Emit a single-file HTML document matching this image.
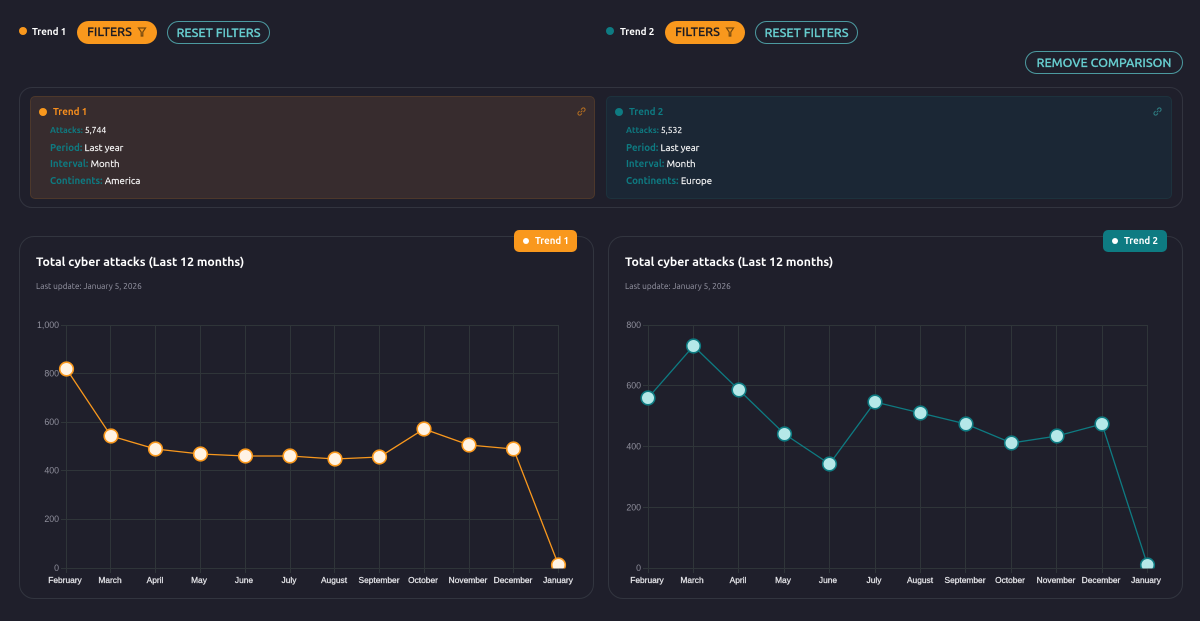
<!DOCTYPE html>
<html><head><meta charset="utf-8">
<style>
html,body{margin:0;padding:0;background:#1f1f2b;}
body{width:1200px;height:621px;overflow:hidden;position:relative;font-family:"Ubuntu","DejaVu Sans","Liberation Sans",sans-serif;}
.a{position:absolute;white-space:nowrap;box-sizing:border-box;}
.dot{border-radius:50%;}
.pill{border-radius:13px;height:23px;font-size:12.5px;font-weight:500;text-align:center;-webkit-text-stroke:.25px currentColor;}
.f{background:#f9981d;color:#1b1b24;line-height:23px;}
.r{border:1px solid #4c9aa0;color:#67cdcf;line-height:22px;}
.card{border-radius:5px;}
.lb{font-size:9.7px;color:#0e7b82;font-weight:bold;}
.lb span{color:#fff;font-weight:normal;-webkit-text-stroke:.15px #fff;}
.tag{height:22px;border-radius:5px;color:#fff;font-size:9.7px;font-weight:bold;line-height:22px;}
svg text{font-family:"Liberation Sans",sans-serif;font-size:8.8px;}
.x text{font-size:8.4px;stroke:#e6e6ea;stroke-width:.25px;}
</style></head><body>

<div class="a dot" style="left:19px;top:27px;width:8px;height:8px;background:#f9981d"></div>
<div class="a" style="left:32px;top:25px;font-size:9.8px;font-weight:bold;color:#fff;line-height:14px">Trend 1</div>
<div class="a pill f" style="left:77px;top:21px;width:80px;padding-right:15px">FILTERS</div>
<svg class="a" style="left:137px;top:27px" width="10" height="11" viewBox="0 0 10 11"><path d="M1.500 1H8.500L5.800 5V9H4.200V5Z" fill="none" stroke="#74490f" stroke-width="1.200"/></svg>
<div class="a pill r" style="left:167px;top:21px;width:103px">RESET FILTERS</div>

<div class="a dot" style="left:606px;top:27px;width:8px;height:8px;background:#0e7b82"></div>
<div class="a" style="left:620px;top:25px;font-size:9.8px;font-weight:bold;color:#fff;line-height:14px">Trend 2</div>
<div class="a pill f" style="left:665px;top:21px;width:80px;padding-right:15px">FILTERS</div>
<svg class="a" style="left:725px;top:27px" width="10" height="11" viewBox="0 0 10 11"><path d="M1.500 1H8.500L5.800 5V9H4.200V5Z" fill="none" stroke="#74490f" stroke-width="1.200"/></svg>
<div class="a pill r" style="left:755px;top:21px;width:103px">RESET FILTERS</div>

<div class="a pill r" style="left:1025px;top:51px;width:158px">REMOVE COMPARISON</div>

<div class="a" style="left:19px;top:87px;width:1164px;height:121px;border:1px solid #32343f;border-radius:13px"></div>

<div class="a card" style="left:30px;top:96px;width:565px;height:103px;background:#372c2e;border:1px solid #4d382b"></div>
<div class="a dot" style="left:39px;top:108px;width:8px;height:8px;background:#f9981d"></div>
<div class="a" style="left:53px;top:105px;font-size:9.8px;font-weight:bold;color:#f98f1d;line-height:14px">Trend 1</div>
<div class="a lb" style="left:50px;top:124px;font-size:8.500px;line-height:12px">Attacks: <span>5,744</span></div>
<div class="a lb" style="left:50px;top:141px;line-height:14px">Period: <span>Last year</span></div>
<div class="a lb" style="left:50px;top:157px;line-height:14px">Interval: <span>Month</span></div>
<div class="a lb" style="left:50px;top:174px;line-height:14px">Continents: <span>America</span></div>
<svg class="a" style="left:577px;top:107px" width="9" height="9" viewBox="0 0 9 9"><path d="M3.600 5.400L5.400 3.600M4 2.600L5.200 1.400A1.500 1.500 0 0 1 7.600 3.800L6.400 5M5 6.400L3.800 7.600A1.500 1.500 0 0 1 1.400 5.200L2.600 4" fill="none" stroke="#b66f20" stroke-width="1"/></svg>

<div class="a card" style="left:606px;top:96px;width:566px;height:103px;background:#1b2735;border:1px solid #1d323d"></div>
<div class="a dot" style="left:615px;top:108px;width:8px;height:8px;background:#0e7b82"></div>
<div class="a" style="left:629px;top:105px;font-size:9.8px;font-weight:bold;color:#0e7b82;line-height:14px">Trend 2</div>
<div class="a lb" style="left:626px;top:124px;font-size:8.500px;line-height:12px">Attacks: <span>5,532</span></div>
<div class="a lb" style="left:626px;top:141px;line-height:14px">Period: <span>Last year</span></div>
<div class="a lb" style="left:626px;top:157px;line-height:14px">Interval: <span>Month</span></div>
<div class="a lb" style="left:626px;top:174px;line-height:14px">Continents: <span>Europe</span></div>
<svg class="a" style="left:1153px;top:107px" width="9" height="9" viewBox="0 0 9 9"><path d="M3.600 5.400L5.400 3.600M4 2.600L5.200 1.400A1.500 1.500 0 0 1 7.600 3.800L6.400 5M5 6.400L3.800 7.600A1.500 1.500 0 0 1 1.400 5.200L2.600 4" fill="none" stroke="#2f7f84" stroke-width="1"/></svg>

<div class="a" style="left:19px;top:236px;width:575px;height:363px;border:1px solid #32353f;border-radius:15px"></div>
<div class="a" style="left:608px;top:236px;width:575px;height:363px;border:1px solid #32353f;border-radius:15px"></div>

<div class="a tag" style="left:514px;top:230px;width:63px;background:#f9981d;padding-left:21px">Trend 1</div>
<div class="a dot" style="left:523px;top:238px;width:6px;height:6px;background:#fff"></div>
<div class="a tag" style="left:1103px;top:230px;width:64px;background:#0e7b82;padding-left:21px">Trend 2</div>
<div class="a dot" style="left:1112px;top:238px;width:6px;height:6px;background:#fff"></div>

<div class="a" style="left:36px;top:255px;font-size:12.250px;font-weight:bold;color:#fff;line-height:16px">Total cyber attacks (Last 12 months)</div>
<div class="a" style="left:36px;top:280px;font-size:8.250px;color:#9a9aa8;line-height:12px">Last update: January 5, 2026</div>
<div class="a" style="left:625px;top:255px;font-size:12.250px;font-weight:bold;color:#fff;line-height:16px">Total cyber attacks (Last 12 months)</div>
<div class="a" style="left:625px;top:280px;font-size:8.250px;color:#9a9aa8;line-height:12px">Last update: January 5, 2026</div>

<svg class="a" style="left:0;top:0" width="1200" height="621" viewBox="0 0 1200 621">
<defs>
<clipPath id="c1"><rect x="40" y="320" width="530" height="248.500"/></clipPath>
<clipPath id="c2"><rect x="625" y="320" width="535" height="248.500"/></clipPath>
</defs>
<g stroke="#2f3539" stroke-width="1" fill="none">
<path d="M61 325.500H558M61 373.500H558M61 422.500H558M61 470.500H558M61 519.500H558M61 568.500H558"/>
<path d="M66.500 325V573M110.500 325V573M155.500 325V573M200.500 325V573M245.500 325V573M290.500 325V573M334.500 325V573M379.500 325V573M424.500 325V573M469.500 325V573M513.500 325V573M558.500 325V573"/>
<path d="M643 325.500H1147M643 385.500H1147M643 446.500H1147M643 507.500H1147M643 568.500H1147"/>
<path d="M648.500 325V573M693.500 325V573M738.500 325V573M784.500 325V573M829.500 325V573M875.500 325V573M920.500 325V573M965.500 325V573M1011.500 325V573M1056.500 325V573M1102.500 325V573M1147.500 325V573"/>
</g>
<g fill="#8f8f9c" text-anchor="end">
<text x="59" y="328">1,000</text><text x="59" y="376.500">800</text><text x="59" y="425">600</text><text x="59" y="473.500">400</text><text x="59" y="522">200</text><text x="59" y="571">0</text>
<text x="641" y="328">800</text><text x="641" y="388.500">600</text><text x="641" y="449.500">400</text><text x="641" y="510.500">200</text><text x="641" y="571">0</text>
</g>
<g class="x" fill="#e6e6ea" text-anchor="middle">
<text x="65" y="583">February</text><text x="110" y="583">March</text><text x="155" y="583">April</text><text x="199" y="583">May</text><text x="244" y="583">June</text><text x="289" y="583">July</text><text x="334" y="583">August</text><text x="379" y="583">September</text><text x="423" y="583">October</text><text x="468" y="583">November</text><text x="513" y="583">December</text><text x="558" y="583">January</text>
<text x="647" y="583">February</text><text x="692" y="583">March</text><text x="738" y="583">April</text><text x="783" y="583">May</text><text x="828" y="583">June</text><text x="874" y="583">July</text><text x="920" y="583">August</text><text x="965" y="583">September</text><text x="1010" y="583">October</text><text x="1056" y="583">November</text><text x="1101" y="583">December</text><text x="1146" y="583">January</text>
</g>
<g clip-path="url(#c1)">
<polyline fill="none" stroke="#f9981d" stroke-width="1.300" points="66.500,369 111,436 155.500,449 200.500,454 245.500,456 290,456 335,459 379.500,457 424,429 469,445 513.500,449 558.500,565"/>
<g fill="#fff3e4" stroke="#f9981d" stroke-width="1.600">
<circle cx="66.500" cy="369" r="6.800"/><circle cx="111" cy="436" r="6.800"/><circle cx="155.500" cy="449" r="6.800"/><circle cx="200.500" cy="454" r="6.800"/><circle cx="245.500" cy="456" r="6.800"/><circle cx="290" cy="456" r="6.800"/><circle cx="335" cy="459" r="6.800"/><circle cx="379.500" cy="457" r="6.800"/><circle cx="424" cy="429" r="6.800"/><circle cx="469" cy="445" r="6.800"/><circle cx="513.500" cy="449" r="6.800"/><circle cx="558.500" cy="565" r="6.800"/>
</g>
</g>
<g clip-path="url(#c2)">
<polyline fill="none" stroke="#0e7b82" stroke-width="1.300" points="648,398 693.500,346 739,390 784.500,434 829.500,464 875,402 920.500,413 966,424 1011.500,443 1057,436 1102,424 1147.500,565"/>
<g fill="#b5e8e8" stroke="#0e7b82" stroke-width="1.600">
<circle cx="648" cy="398" r="6.800"/><circle cx="693.500" cy="346" r="6.800"/><circle cx="739" cy="390" r="6.800"/><circle cx="784.500" cy="434" r="6.800"/><circle cx="829.500" cy="464" r="6.800"/><circle cx="875" cy="402" r="6.800"/><circle cx="920.500" cy="413" r="6.800"/><circle cx="966" cy="424" r="6.800"/><circle cx="1011.500" cy="443" r="6.800"/><circle cx="1057" cy="436" r="6.800"/><circle cx="1102" cy="424" r="6.800"/><circle cx="1147.500" cy="565" r="6.800"/>
</g>
</g>
</svg>
</body></html>
